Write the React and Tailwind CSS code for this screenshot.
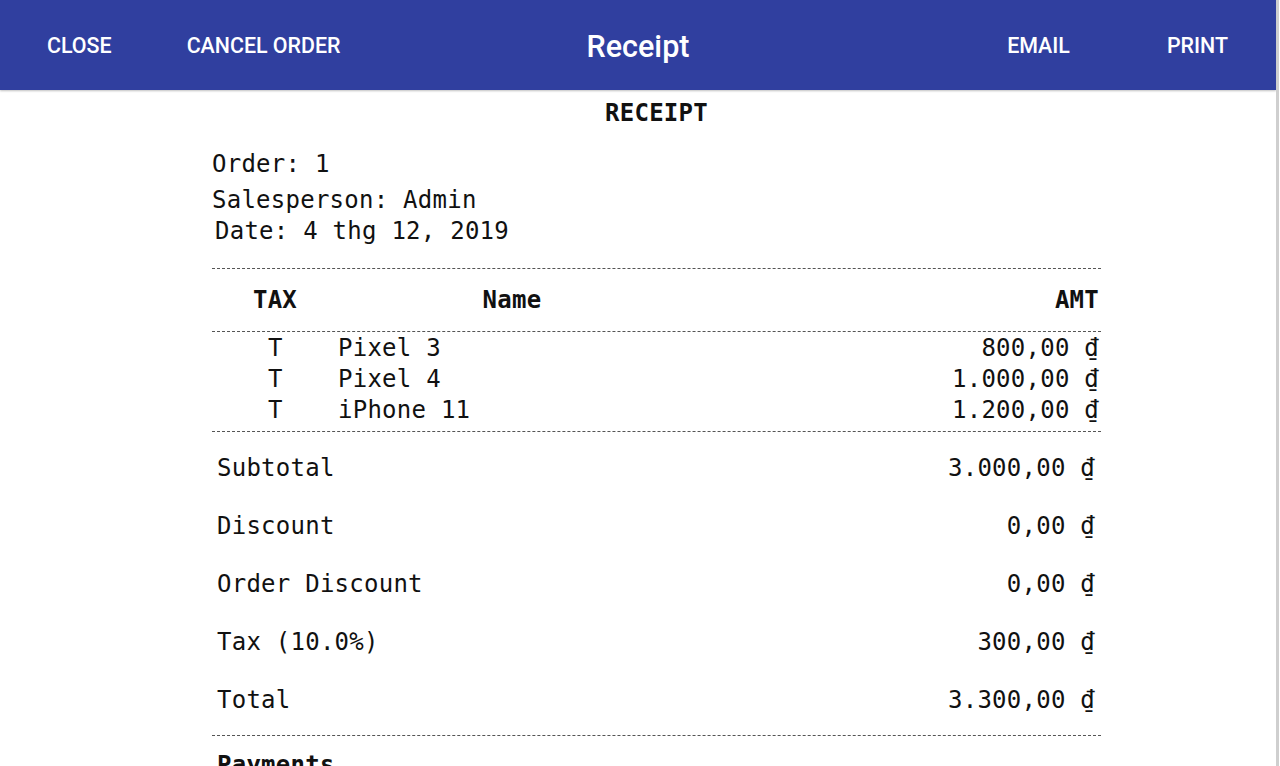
const items = [
  { tax: "T", name: "Pixel 3", amt: "800,00" },
  { tax: "T", name: "Pixel 4", amt: "1.000,00" },
  { tax: "T", name: "iPhone 11", amt: "1.200,00" },
];

const totals = [
  { label: "Subtotal", amt: "3.000,00" },
  { label: "Discount", amt: "0,00" },
  { label: "Order Discount", amt: "0,00" },
  { label: "Tax (10.0%)", amt: "300,00" },
  { label: "Total", amt: "3.300,00" },
];

const Dong = () => <span>₫</span>;

const App = () => {
  return (
    <div className="flex h-[766px] overflow-hidden bg-white">
      <div className="w-[1276px] flex flex-col">
        <header className="h-[90px] shrink-0 pt-[2px] bg-[#303f9f] grid grid-cols-[1fr_auto_1fr] items-center text-white font-['Roboto',sans-serif] shadow-[0_1px_2px_rgba(0,0,0,0.25)]">
          <div className="flex items-center text-[21.4px] font-medium">
            <button className="ml-[47px]">CLOSE</button>
            <button className="ml-[75px]">CANCEL ORDER</button>
          </div>
          <h1 className="text-[30.5px] font-medium pt-[1px]">Receipt</h1>
          <div className="flex items-center justify-end text-[21.4px] font-medium">
            <button>EMAIL</button>
            <button className="ml-[97px] mr-[48px]">PRINT</button>
          </div>
        </header>

        <main className="ml-[212px] w-[889px] font-['DejaVu_Sans_Mono',monospace] text-[24px] tracking-[0.25px] text-[#111]">
          <div className="h-[46px] flex items-center justify-center font-bold">RECEIPT</div>

          <div className="pt-[10px]">
            <div className="h-[36px] flex items-center">Order: 1</div>
            <div className="h-[35px] flex items-center">Salesperson: Admin</div>
            <div className="h-[28px] flex items-center pl-[3px]">Date: 4 thg 12, 2019</div>
          </div>

          <div className="mt-[23px] border-t border-dashed border-[#555]" />
          <div className="h-[62px] grid grid-cols-[126px_348px_1fr] items-center font-bold">
            <span className="text-center">TAX</span>
            <span className="text-center">Name</span>
            <span className="text-right pr-[2px]">AMT</span>
          </div>
          <div className="border-t border-dashed border-[#555]" />

          <div className="pb-[6px]">
            {items.map((it) => (
              <div key={it.name} className="h-[31px] flex items-center">
                <span className="w-[126px] pl-[56px]">{it.tax}</span>
                <span className="flex-1">{it.name}</span>
                <span className="pr-[2px]">
                  {it.amt} <Dong />
                </span>
              </div>
            ))}
          </div>
          <div className="border-t border-dashed border-[#555]" />

          <div className="pt-[7px] pb-[6px]">
            {totals.map((t) => (
              <div key={t.label} className="h-[58px] flex items-center justify-between pl-[5px] pr-[6px]">
                <span>{t.label}</span>
                <span>
                  {t.amt} <Dong />
                </span>
              </div>
            ))}
          </div>
          <div className="border-t border-dashed border-[#555]" />

          <div className="h-[58px] flex items-center pl-[5px] font-bold">Payments</div>
        </main>
      </div>
      <div className="w-[3px] bg-[#cfcfcf]" />
      <div className="w-[1px] bg-white" />
    </div>
  );
};

export default App;
